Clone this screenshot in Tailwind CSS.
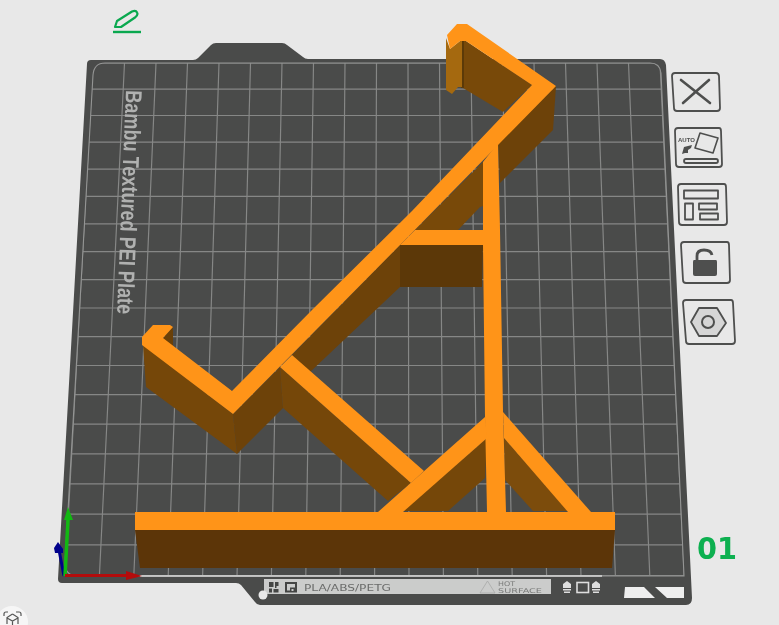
<!DOCTYPE html>
<html lang="en">
<head>
  <meta charset="UTF-8" />
  <title>Plate view</title>
  <script src="https://cdn.jsdelivr.net/npm/@tailwindcss/browser@4"></script>
</head>
<body class="m-0 bg-[#e8e8e8]">
  <div class="w-[779px] h-[625px] overflow-hidden bg-[#e8e8e8]">
    <svg class="block blur-[0.4px]" width="779" height="625" viewBox="0 0 779 625">
      <defs>
        <clipPath id="gridclip">
          <path d="M105 63 H650 Q660 63 661 73 L684 576 H78 Q65 576 65 563 L93 75 Q94 63 105 63 Z" />
        </clipPath>
      </defs>

      <!-- plate -->
      <path class="fill-[#4a4b4a]" d="M91 60 H193 Q196 60 198 58 L211 45 Q213 43 216 43 H282 Q285 43 287 45 L303 57 Q305 59 308 59 H660 Q665 59 666 65 L692 598 Q692 605 686 605 H260 Q257 605 255 602 L241 585 Q239 583 236 583 H62 Q58 583 58 579 L87 64 Q87 60 91 60 Z" />
      <g clip-path="url(#gridclip)">
        <path id="grid" class="stroke-[#868786]" fill="none" stroke-width="1.2" />
      </g>
      <path class="stroke-[#949594]" fill="none" stroke-width="1.1" d="M105 63 H650 Q660 63 661 73 L684 576 H78 Q65 576 65 563 L93 75 Q94 63 105 63 Z" />
      <path class="stroke-[#d8d8d8]" fill="none" stroke-width="1.5" d="M140 576 H602" />

      <!-- plate name -->
      <text transform="translate(126 90) rotate(92.3)" class="fill-[#b0b1b0] font-['Liberation_Sans'] font-bold text-[23px]" textLength="224" lengthAdjust="spacingAndGlyphs">Bambu Textured PEI Plate</text>

      <!-- bottom label strip -->
      <rect x="264" y="579" width="287" height="15" class="fill-[#cbcccb]" />
      <circle cx="263" cy="595" r="4.5" class="fill-[#e8e8e8]" />
      <g class="fill-[#444544]">
        <path d="M269 582 h4.5 v5 h-4.5 z M275 582 h3.5 v4 h-2 v2 h-1.5 z M269 588.5 h3 v4 h-3 z M273.5 589 h5 v3.5 h-5 z" />
        <path fill-rule="evenodd" d="M285 582 h12 v10.5 h-12 z M287 584 v6.5 h3 v-3 h5 v-3.5 z M291.5 589 v2 h2 v-2 z" />
      </g>
      <text x="304" y="591" class="fill-[#6b6c6b] font-['DejaVu_Sans'] text-[9.5px]" textLength="87" lengthAdjust="spacingAndGlyphs">PLA/ABS/PETG</text>
      <path d="M480 593 L487.500 581 L495 593 Z" fill="none" class="stroke-[#a8a9a8]" stroke-width="0.8" />
      <text x="498" y="586" class="fill-[#7a7b7a] font-['DejaVu_Sans'] text-[6.5px]" textLength="17" lengthAdjust="spacingAndGlyphs">HOT</text>
      <text x="498" y="592.500" class="fill-[#7a7b7a] font-['DejaVu_Sans'] text-[6.5px]" textLength="44" lengthAdjust="spacingAndGlyphs">SURFACE</text>

      <!-- little marks right of the strip -->
      <g class="fill-[#dedede]">
        <path d="M567 581 L571 584 V588 H563 V584 Z M563 589 h8 v1.500 h-8 z M564 591.500 h6 v1.500 h-6 z" />
        <path d="M596 581 L600 584 V588 H592 V584 Z M592 589 h8 v1.500 h-8 z M593 591.500 h6 v1.500 h-6 z" />
      </g>
      <rect x="577" y="582.500" width="11.500" height="10" fill="none" class="stroke-[#dedede]" stroke-width="1.6" />
      <path class="fill-[#eeeeee]" d="M625 587 H644 L655 598 H624 Z M655 587 H684 V598 H667 Z" />

      <!-- model: walls -->
      <path class="fill-[#5c3508]" d="M135 530 H615 L612 568 H140 Z" />
      <path class="fill-[#5c3808]" d="M400 245 H483 L482 287 H400 Z" />
      <path class="fill-[#754709]" d="M143 345 L233 414 L237 454 L146 387 Z" />
      <path class="fill-[#6d4209]" d="M233 414 L280 367 L283 408 L237 454 Z" />
      <path class="fill-[#6d4209]" d="M292 355 L400 245 V287 L309 373 Z" />
      <path class="fill-[#754709]" d="M280 367 L411 483 L388 501 L283 408 Z" />
      <path class="fill-[#784909]" d="M415 230 L483 162 L483 206 L480 207 L458 230 Z" />
      <path class="fill-[#6d4209]" d="M498 143 L556 86 L553 130 L500 183 Z" />
      <path class="fill-[#784909]" d="M466 41 L532 85 L503 112 L463 88 V41 Z" />
      <path class="fill-[#5c3a08]" d="M461 41 H464 V88 H461 Z" />
      <path class="fill-[#a5690f]" d="M446 38 L450 49 L460 41 L462 41 V87 L458 87 L452 94 L446 90 Z" />
      <path class="fill-[#6a4008]" d="M163 338 L173 327 V349 Z" />
      <path class="fill-[#754709]" d="M487 438 L485 478 L448 511 H403 Z" />
      <path class="fill-[#7c4c0c]" d="M504 438 L505 480 L533 511 H568 Z" />

      <!-- model: orange top face, one polygon per bar -->
      <g class="fill-[#ff9418]">
        <path d="M447 35 L457 24 H467 L556 86 L400 245 L233 414 L142 345 V337 L153 325 H170 L173 327 L163 338 L232 391 L312 310 L412 211 L532 85 L466 41 H460 L450 49 Z" />
        <path d="M415 230 H483 V245 H400 Z" />
        <path d="M483 162 L498 143 L500 230 L503 412 L506 512 H487 L485 417 L483 245 Z" />
        <path d="M292 355 L424 471 L411 483 L280 367 Z" />
        <path d="M378 512 L485 417 L487 438 L403 512 Z" />
        <path d="M503 412 L591 512 H568 L504 438 Z" />
        <path d="M135 512 H615 V530 H135 Z" />
      </g>

      <!-- axes -->
      <path class="stroke-[#00008b]" fill="none" stroke-width="3" d="M64 576 L59 550" />
      <path class="fill-[#00008b]" d="M58 542 L63 549 V553 L55 553 L54 548 Z" />
      <path class="stroke-[#12b812]" fill="none" stroke-width="3.500" d="M65 576 L68 520" />
      <path class="fill-[#12b812]" d="M68 507 L73 520 H64 Z" />
      <path class="stroke-[#b30c0c]" fill="none" stroke-width="3" d="M65 575.500 H127" />
      <path class="fill-[#b30c0c]" d="M126 571 L142 576 L126 580 Z" />

      <!-- edit pencil -->
      <g fill="none" class="stroke-[#0aa84f]" stroke-linejoin="round">
        <path stroke-width="2.200" d="M115 27 L117 21 L132 11.500 Q136 10 137 12.500 Q138.500 15 135 17.500 L121 27 Z" />
        <path stroke-width="2.400" d="M113 32 H141" />
      </g>

      <!-- plate toolbar -->
      <g fill="none" class="stroke-[#4e4f4e]" stroke-width="1.800" stroke-linejoin="round">
        <path d="M675 73 H716 Q718.500 73 719 76 L720 108 Q720 111 717 111 H677 Q674 111 674 108 L672 76 Q672 73 675 73 Z" />
        <path stroke-width="2.600" stroke-linecap="round" d="M681 80 L710 103 M709 80 L683 103" />

        <path d="M678 128 H719 Q721 128 721 131 L722 164 Q722 167 719 167 H679 Q676 167 676 164 L675 131 Q675 128 678 128 Z" />
        <path stroke-width="1.600" d="M695 148 L700 133 L718 138 L713 153 Z" />
        <rect x="684" y="159" width="34" height="4" rx="2" />

        <path d="M681 184 H724 Q726 184 726 187 L727 222 Q727 225 724 225 H682 Q679 225 679 222 L678 187 Q678 184 681 184 Z" />
        <rect x="684" y="190.500" width="34" height="8" />
        <rect x="685" y="203.500" width="8" height="16" />
        <rect x="699" y="203.500" width="18" height="6" />
        <rect x="700" y="213.500" width="18" height="6" />

        <path d="M684 242 H727 Q729 242 729 245 L730 280 Q730 283 727 283 H686 Q683 283 683 280 L681 245 Q681 242 684 242 Z" />
        <path stroke-width="2.800" d="M697 261 V256 Q697 250 704 250 Q711 250 712 255" />

        <path d="M686 300 H731 Q733 300 733 303 L735 341 Q735 344 732 344 H689 Q686 344 686 341 L683 303 Q683 300 686 300 Z" />
        <path stroke-width="1.800" class="fill-[#d6d6d6]" d="M691 322 L699 308 H717 L726 323 L717 336 H699 Z" />
        <circle cx="708" cy="322" r="6" stroke-width="2" />
      </g>
      <path class="fill-[#4e4f4e]" d="M694 260 H716 Q717 260 717 262 V274 Q717 276 715 276 H695 Q693 276 693 274 V262 Q693 260 694 260 Z" />
      <path class="fill-[#4e4f4e]" d="M682 154 L684 147 L692 145 L691 148 L688 150 L688 153 L685 153 Z" />
      <text x="678" y="142" class="fill-[#4e4f4e] font-['Liberation_Sans'] font-bold text-[6px]" textLength="17" lengthAdjust="spacingAndGlyphs">AUTO</text>

      <!-- plate number -->
      <text x="697" y="559" class="fill-[#0db050] font-['DejaVu_Sans'] font-bold text-[30px]" textLength="40" lengthAdjust="spacingAndGlyphs">01</text>

      <!-- view button -->
      <circle cx="12" cy="622" r="16" class="fill-[#f6f6f6]" />
      <g fill="none" class="stroke-[#555655]" stroke-width="1.200">
        <path d="M4 616 V614 Q4 612 6 612 H8 M16 612 H19 Q21 612 21 614 V616" />
        <path d="M12.500 614 L18 617.500 V624 M12.500 614 L7 617.500 V624 M7 618 L12.500 621 L18 618 M12.500 621 V625" />
      </g>
    </svg>
  </div>

  <script>
    // plate grid: 18 cells each way, spacing grows towards the viewer
    let d = "";
    for (let i = 0; i <= 18; i++) {
      const top = 93 + 31.5 * i;
      const bottom = 65 + 34.4 * i;
      d += `M${top} 63 L${bottom} 576 `;
    }
    let y = 63;
    for (let k = 0; k <= 18; k++) {
      const t = (y - 63) / 513;
      d += `M${93 - 28 * t} ${y} L${660 + 24 * t} ${y} `;
      y += 26.1 + 0.28 * k;
    }
    document.getElementById("grid").setAttribute("d", d);
  </script>
</body>
</html>
